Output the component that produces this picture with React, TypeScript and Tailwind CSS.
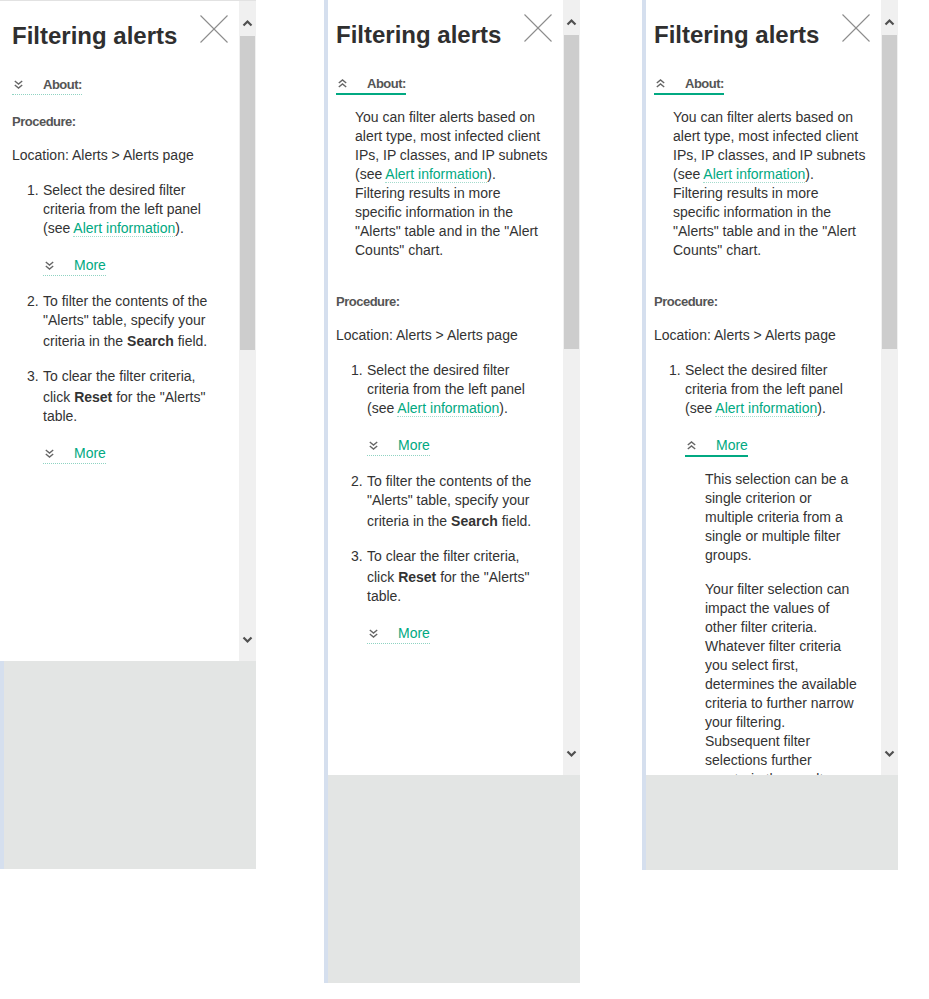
import React from "react"

const teal = "text-[#01a982]"

function Chevrons({ up }: { up?: boolean }) {
  return (
    <svg width="9" height="9" viewBox="0 0 9 9" fill="none" stroke="#666" strokeWidth="1.4" className="shrink-0">
      {up ? (
        <>
          <polyline points="0.8,4 4.5,1 8.2,4" />
          <polyline points="0.8,8 4.5,5 8.2,8" />
        </>
      ) : (
        <>
          <polyline points="0.8,1 4.5,4 8.2,1" />
          <polyline points="0.8,5 4.5,8 8.2,5" />
        </>
      )}
    </svg>
  )
}

function Toggle({ label, open, heading }: { label: string; open?: boolean; heading?: boolean }) {
  return (
    <div
      className={`inline-flex items-center pl-[2px] ${
        open ? "border-b-2 border-[#01a982]" : "border-b border-dotted border-[#8fd3c2]"
      }`}
    >
      <Chevrons up={open} />
      <span
        className={
          heading
            ? "ml-[20px] text-[13px] font-bold tracking-[-0.5px] text-[#555]"
            : `ml-[20px] ${teal}`
        }
      >
        {label}
      </span>
    </div>
  )
}

function AlertLink() {
  return <span className={`${teal} border-b border-dotted border-[#a3dccd]`}>Alert information</span>
}

function Strong({ children }: { children: React.ReactNode }) {
  return <b className="inline-block pt-[2px]">{children}</b>
}

function Arrow({ down }: { down?: boolean }) {
  return (
    <svg width="11" height="8" viewBox="0 0 11 8" fill="none" stroke="#505050" strokeWidth="2.2">
      <polyline points={down ? "1.5,1.5 5.5,5.5 9.5,1.5" : "1.5,6.5 5.5,2.5 9.5,6.5"} />
    </svg>
  )
}

function Scrollbar() {
  return (
    <div className="flex w-[17px] shrink-0 flex-col bg-[#f0f0f0]">
      <div className="flex h-[35px] justify-center pt-[18px]">
        <Arrow />
      </div>
      <div className="mx-[1px] h-[314px] bg-[#cdcdcd]" />
      <div className="flex-1" />
      <div className="flex h-[35px] items-end justify-center pb-[17px]">
        <Arrow down />
      </div>
    </div>
  )
}

function CloseIcon() {
  return (
    <svg width="28" height="28" viewBox="0 0 28 28" stroke="#8c8c8c" strokeWidth="1.1">
      <line x1="0.5" y1="0.5" x2="27.5" y2="27.5" />
      <line x1="27.5" y1="0.5" x2="0.5" y2="27.5" />
    </svg>
  )
}

function Item({ n, children, more }: { n: number; children: React.ReactNode; more?: React.ReactNode }) {
  return (
    <div className="flex">
      <span className="w-[31px] shrink-0 pl-[15px]">{n}.</span>
      <div className="flex-1">
        <p>{children}</p>
        {more}
      </div>
    </div>
  )
}

function MoreBlock({ open }: { open?: boolean }) {
  return (
    <div className="mt-[18px] flex flex-col items-start">
      <Toggle label="More" open={open} />
      {open && (
        <div className="ml-[20px] mt-[13px] flex w-[157px] flex-col gap-[15px]">
          <p>This selection can be a single criterion or multiple criteria from a single or multiple filter groups.</p>
          <p>
            Your filter selection can impact the values of other filter criteria. Whatever filter criteria you
            select first, determines the available criteria to further narrow your filtering. Subsequent filter
            selections further constrain the results.
          </p>
        </div>
      )}
    </div>
  )
}

function Panel({ first, aboutOpen, moreOpen, tall }: { first?: boolean; aboutOpen?: boolean; moreOpen?: boolean; tall?: boolean }) {
  return (
    <div className="flex w-[256px] shrink-0 flex-col">
      <div
        className={`flex overflow-hidden ${
          first ? "h-[661px] border-t border-[#e2e2e2]" : "h-[775px]"
        }`}
      >
        <div className={first ? "w-[4px] shrink-0 bg-white" : "w-[4px] shrink-0 bg-[#d5dfee]"} />
        <div className="w-[235px] shrink-0 overflow-hidden bg-white">
          <div className="flex items-start justify-between pl-[8px] pr-[11px] pt-[14px]">
            <h1 className="mt-[6px] text-[24px] font-bold leading-[30px] text-[#2f2f2f]">Filtering alerts</h1>
            <CloseIcon />
          </div>
          <div className="flex flex-col pl-[8px] pr-[18px]">
            <div className="mt-[24px]">
              <Toggle label="About:" heading open={aboutOpen} />
            </div>
            {aboutOpen && (
              <p className="mb-[15px] ml-[19px] mt-[13px] w-[194px]">
                You can filter alerts based on alert type, most infected client IPs, IP classes, and IP subnets (see{" "}
                <AlertLink />
                ). Filtering results in more specific information in the "Alerts" table and in the "Alert Counts"
                chart.
              </p>
            )}
            <p className="mt-[17px] text-[13px] font-bold tracking-[-0.5px] text-[#555]">Procedure:</p>
            <p className="mt-[15px]">Location: Alerts &gt; Alerts page</p>
            <div className="mt-[16px] flex flex-col gap-[16px]">
              <Item n={1} more={<MoreBlock open={moreOpen} />}>
                Select the desired filter criteria from the left panel (see <AlertLink />
                ).
              </Item>
              <Item n={2}>
                To filter the contents of the "Alerts" table, specify your criteria in the <Strong>Search</Strong> field.
              </Item>
              <Item n={3} more={<MoreBlock />}>
                To clear the filter criteria, click <Strong>Reset</Strong> for the "Alerts" table.
              </Item>
            </div>
          </div>
        </div>
        <Scrollbar />
      </div>
      <div className={`flex ${tall ? "h-[208px]" : "h-[95px]"} bg-[#e3e5e4]`}>
        <div className="w-[4px] bg-[#d5dfee]" />
      </div>
    </div>
  )
}

export default function App() {
  return (
    <div className="flex min-h-screen items-start bg-white font-['Liberation_Sans',Arial,sans-serif] text-[14px] leading-[19px] text-[#333]">
      <Panel first tall />
      <div className="ml-[68px]">
        <Panel aboutOpen tall />
      </div>
      <div className="ml-[62px]">
        <Panel aboutOpen moreOpen />
      </div>
    </div>
  )
}
